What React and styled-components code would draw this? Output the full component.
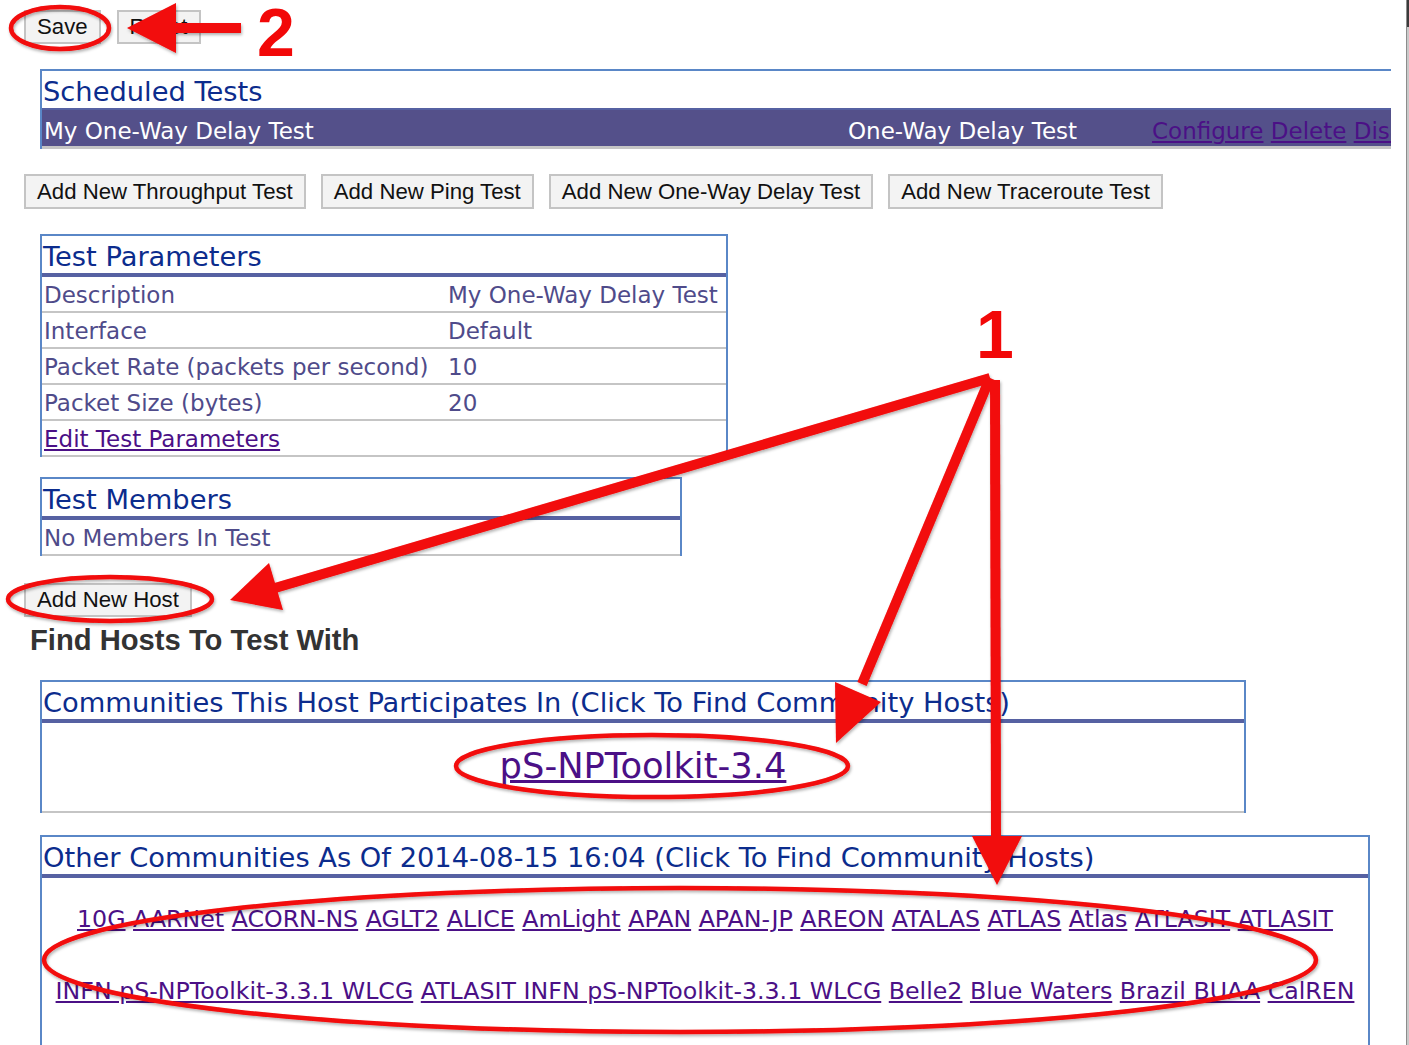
import React from "react";
import styled, { createGlobalStyle } from "styled-components";

const GlobalStyle = createGlobalStyle`
    html, body {
        margin: 0;
        padding: 0;
        background: #fff;
    }
    body {
        font-family: "DejaVu Sans", "Noto Sans", sans-serif;
    }
`;

const c = {
    border: "#5a87c7",
    slate: "#5661a2",
    title: "#0c2c8d",
    text: "#4f4b8a",
    row: "#54508a",
    link: "#4b1086",
    grey: "#c5c5c5",
    red: "#f20808",
};

const parameters = [
    ["Description", "My One-Way Delay Test"],
    ["Interface", "Default"],
    ["Packet Rate (packets per second)", "10"],
    ["Packet Size (bytes)", "20"],
];

const communityLines = [
    ["10G", "AARNet", "ACORN-NS", "AGLT2", "ALICE", "AmLight", "APAN", "APAN-JP", "AREON", "ATALAS", "ATLAS", "Atlas", "ATLASIT", "ATLASIT"],
    ["INFN pS-NPToolkit-3.3.1 WLCG", "ATLASIT INFN pS-NPToolkit-3.3.1 WLCG", "Belle2", "Blue Waters", "Brazil", "BUAA", "CalREN"],
];

const addButtons = ["Add New Throughput Test", "Add New Ping Test", "Add New One-Way Delay Test", "Add New Traceroute Test"];

export default function App() {
    return (
        <Screen>
            <GlobalStyle />
            <Main>
                <Toolbar>
                    <Button>Save</Button>
                    <Button>Reset</Button>
                </Toolbar>

                <Clip>
                    <Panel $width="1500px" $noRight>
                        <PanelTitle $sep="2px">Scheduled Tests</PanelTitle>
                        <ScheduleRow>
                            <span>My One-Way Delay Test</span>
                            <span>One-Way Delay Test</span>
                            <Links>
                                <a href="#">Configure</a> <a href="#">Delete</a> <a href="#">Disable</a>
                            </Links>
                        </ScheduleRow>
                    </Panel>
                </Clip>

                <ButtonRow>
                    {addButtons.map((label) => (
                        <Button key={label}>{label}</Button>
                    ))}
                </ButtonRow>

                <Panel $width="688px" $top="25px">
                    <PanelTitle>Test Parameters</PanelTitle>
                    {parameters.map(([label, value]) => (
                        <ParamRow key={label}>
                            <span>{label}</span>
                            <span>{value}</span>
                        </ParamRow>
                    ))}
                    <ParamRow>
                        <TextLink href="#">Edit Test Parameters</TextLink>
                    </ParamRow>
                </Panel>

                <Panel $width="642px" $top="20px">
                    <PanelTitle>Test Members</PanelTitle>
                    <ParamRow>No Members In Test</ParamRow>
                </Panel>

                <HostButtonWrap>
                    <Button>Add New Host</Button>
                </HostButtonWrap>

                <Heading>Find Hosts To Test With</Heading>

                <Panel $width="1206px" $top="24px">
                    <PanelTitle>Communities This Host Participates In (Click To Find Community Hosts)</PanelTitle>
                    <HostCommunity>
                        <BigLink href="#">pS-NPToolkit-3.4</BigLink>
                    </HostCommunity>
                </Panel>

                <Panel $width="1330px" $top="22px">
                    <PanelTitle>Other Communities As Of 2014-08-15 16:04 (Click To Find Community Hosts)</PanelTitle>
                    <CommunityList>
                        {communityLines.map((line, i) => (
                            <CommunityLine key={i}>
                                {line.map((name, j) => (
                                    <React.Fragment key={j}>
                                        {j > 0 && " "}
                                        <TextLink href="#">{name}</TextLink>
                                    </React.Fragment>
                                ))}
                            </CommunityLine>
                        ))}
                    </CommunityList>
                </Panel>
            </Main>
            <Edge />
            <Annotations />
        </Screen>
    );
}

function Annotations() {
    return (
        <Overlay viewBox="0 0 1409 1045">
            <defs>
                <filter id="shadow" x="-10%" y="-10%" width="120%" height="130%">
                    <feDropShadow dx="1" dy="2" stdDeviation="1.5" floodColor="#000" floodOpacity="0.3" />
                </filter>
            </defs>
            <g filter="url(#shadow)" fill="none" stroke={c.red} strokeWidth="4.5">
                <ellipse cx="60" cy="28" rx="49" ry="21" />
                <ellipse cx="110" cy="599" rx="102" ry="22" />
                <ellipse cx="652" cy="766" rx="196" ry="31" />
                <ellipse cx="680" cy="960" rx="636" ry="72" />
            </g>
            <g filter="url(#shadow)" fill={c.red} stroke={c.red}>
                {/* arrow 2 */}
                <line x1="241" y1="28" x2="172" y2="28" strokeWidth="10" />
                <polygon points="127,28 176,3 176,53" stroke="none" />
                {/* arrows 1 */}
                <line x1="990" y1="378" x2="275" y2="588" strokeWidth="10" />
                <polygon points="230,600 269,563 283,610" stroke="none" />
                <line x1="990" y1="378" x2="862" y2="684" strokeWidth="10" />
                <polygon points="836,743 835,682 881,702" stroke="none" />
                <line x1="995" y1="380" x2="996" y2="842" strokeWidth="10" />
                <polygon points="997,885 972,836 1022,836" stroke="none" />
            </g>
            <Label x="257" y="56">2</Label>
            <Label x="976" y="358">1</Label>
        </Overlay>
    );
}

const Screen = styled.div`
    position: relative;
    display: flex;
    width: 1409px;
    height: 1045px;
    overflow: hidden;
    background: #fff;
`;

const Main = styled.div`
    flex: 1;
    padding: 10px 0 0 24px;
    overflow: hidden;
`;

const Edge = styled.div`
    width: 2px;
    border-left: 1px solid #8c8c8c;
    background: linear-gradient(#3a3a3a 0 27px, #c9c9c9 27px);
`;

const Toolbar = styled.div`
    display: flex;
    gap: 16px;
`;

const Button = styled.button`
    height: 34px;
    padding: 0 11px;
    border: 2px solid #c4c4c4;
    border-radius: 0;
    background: #f3f3f3;
    color: #111;
    font-family: "Liberation Sans", Arial, sans-serif;
    font-size: 22.2px;
    line-height: 30px;
    white-space: nowrap;
`;

const ButtonRow = styled.div`
    display: flex;
    gap: 15px;
    margin-top: 25px;

    ${Button} {
        height: 35px;
    }
`;

const Clip = styled.div`
    width: 1351px;
    margin: 25px 0 0 16px;
    overflow: hidden;
`;

const Panel = styled.div`
    box-sizing: border-box;
    width: ${(p) => p.$width};
    margin: ${(p) => p.$top || 0} 0 0 ${(p) => (p.$noRight ? 0 : "16px")};
    border: 2px solid ${c.border};
    border-bottom: none;
    ${(p) => p.$noRight && "border-right: none;"}
`;

const PanelTitle = styled.div`
    box-sizing: border-box;
    height: ${(p) => (p.$sep ? "39px" : "41px")};
    padding: 4px 0 0 1px;
    border-bottom: ${(p) => p.$sep || "4px"} solid ${c.slate};
    color: ${c.title};
    font-size: 27.3px;
    line-height: 33px;
    white-space: nowrap;
`;

const ScheduleRow = styled.div`
    display: grid;
    grid-template-columns: 804px 304px auto;
    box-sizing: border-box;
    height: 39px;
    padding: 7px 0 0 2px;
    background: ${c.row};
    border-bottom: 3px solid ${c.grey};
    color: #fff;
    font-size: 23px;
    line-height: 28px;
    white-space: nowrap;
`;

const Links = styled.span`
    a {
        color: ${c.link};
    }
`;

const ParamRow = styled.div`
    display: grid;
    grid-template-columns: 404px 1fr;
    box-sizing: border-box;
    height: 36px;
    padding: 3px 0 0 2px;
    border-bottom: 2px solid ${c.grey};
    color: ${c.text};
    font-size: 23px;
    line-height: 30px;
    white-space: nowrap;
`;

const TextLink = styled.a`
    color: ${c.link};
    text-decoration: underline;
    white-space: nowrap;
`;

const HostButtonWrap = styled.div`
    margin-top: 27px;
`;

const Heading = styled.h3`
    margin: 7px 0 0 6px;
    color: #333;
    font-family: "Liberation Sans", Arial, sans-serif;
    font-size: 29.2px;
    font-weight: 700;
    line-height: 32px;
`;

const HostCommunity = styled.div`
    display: flex;
    align-items: center;
    justify-content: center;
    box-sizing: border-box;
    height: 90px;
    padding-bottom: 2px;
    border-bottom: 2px solid ${c.grey};
`;

const BigLink = styled(TextLink)`
    font-size: 35.3px;
    line-height: 40px;
`;

const CommunityList = styled.div`
    height: 300px;
    padding-top: 5px;
    text-align: center;
`;

const CommunityLine = styled.div`
    font-size: 23.7px;
    line-height: 72px;
    white-space: nowrap;
`;

const Overlay = styled.svg`
    position: absolute;
    top: 0;
    left: 0;
    width: 1409px;
    height: 1045px;
    pointer-events: none;
`;

const Label = styled.text`
    fill: ${c.red};
    font-family: "Liberation Sans", Arial, sans-serif;
    font-size: 68px;
    font-weight: 700;
`;
